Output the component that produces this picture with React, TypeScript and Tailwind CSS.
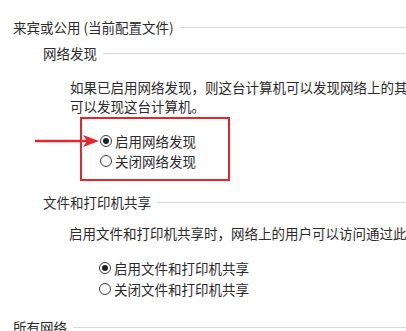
import React from "react";

const font = { fontFamily: '"Noto Sans CJK SC", "Noto Sans", sans-serif' };

function Header({ title, indent }: { title: string; indent: string }) {
  return (
    <div className={`flex items-center h-[20px] ${indent}`}>
      <span className="whitespace-nowrap text-[#2b2b2b]">{title}</span>
      <div className="flex-1 h-px bg-[#d9d9d9] ml-[6px]" />
    </div>
  );
}

function Radio({ label, checked }: { label: string; checked?: boolean }) {
  return (
    <div className="flex items-center h-[20px] whitespace-nowrap">
      <span className="w-[12px] h-[12px] rounded-full border border-[#3c3c3c] bg-white flex items-center justify-center shrink-0">
        {checked && <span className="w-[6px] h-[6px] rounded-full bg-[#1f1f1f]" />}
      </span>
      <span className="ml-[3px] text-[#2b2b2b]">{label}</span>
    </div>
  );
}

export default function App() {
  return (
    <div
      className="w-[406px] h-[331px] overflow-hidden bg-white text-[13.5px] leading-[20px] pt-[17px]"
      style={font}
    >
      <Header title="来宾或公用 (当前配置文件)" indent="pl-[13px]" />
      <div className="mt-[6px]">
        <Header title="网络发现" indent="pl-[43px]" />
      </div>

      <div className="mt-[15px] pl-[70px] leading-[19px] text-[#2b2b2b] whitespace-nowrap">
        <div>如果已启用网络发现，则这台计算机可以发现网络上的其他计算机和设备，而且其他网络计算机亦</div>
        <div>可以发现这台计算机。</div>
      </div>

      <div className="relative">
        <div className="ml-[80px] mt-[1px] w-[150px] h-[64px] border-2 border-[#e5262b] pl-[18px] pt-[12px]">
          <Radio label="启用网络发现" checked />
          <Radio label="关闭网络发现" />
        </div>
        <svg
          className="absolute left-[33px] top-[17px]"
          width="68"
          height="14"
          viewBox="0 0 68 14"
        >
          <line x1="2" y1="7" x2="56" y2="7" stroke="#e5262b" strokeWidth="2.5" />
          <polygon points="50,1 66,7 50,13 54,7" fill="#e5262b" />
        </svg>
      </div>

      <div className="mt-[11px]">
        <Header title="文件和打印机共享" indent="pl-[43px]" />
      </div>

      <div className="mt-[11px] pl-[69px] h-[20px] text-[#2b2b2b] whitespace-nowrap">
        启用文件和打印机共享时，网络上的用户可以访问通过此计算机共享的文件和打印机。
      </div>

      <div className="mt-[15px] pl-[99px] flex flex-col gap-[1px]">
        <Radio label="启用文件和打印机共享" checked />
        <Radio label="关闭文件和打印机共享" />
      </div>

      <div className="mt-[18px]">
        <Header title="所有网络" indent="pl-[13px]" />
      </div>
    </div>
  );
}
